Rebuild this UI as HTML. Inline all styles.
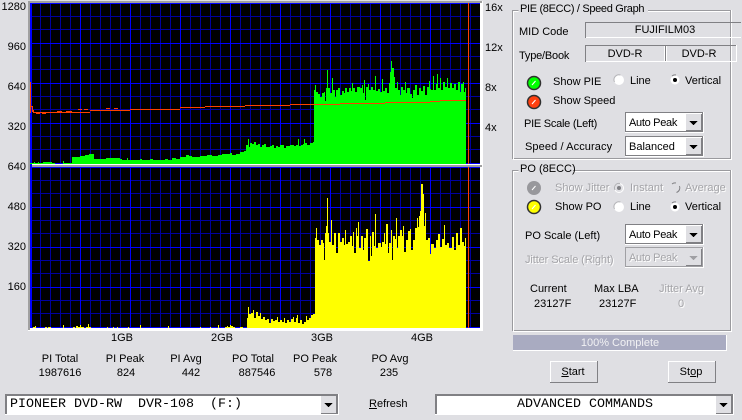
<!DOCTYPE html>
<html><head><meta charset="utf-8">
<style>
html,body{margin:0;padding:0}
body{width:742px;height:420px;overflow:hidden;background:#dfdfe3;position:relative;font-family:"Liberation Sans",sans-serif;font-size:11px;color:#000}
svg{position:absolute;left:0;top:0}
.t{position:absolute;white-space:pre;line-height:14px;transform:translateY(-7px)}
.c{transform:translate(-50%,-7px)}
.r{transform:translate(-100%,-7px)}
.g{color:#a4a4a8;text-shadow:1px 1px 0 #fff}
.m{font-family:"Liberation Mono",monospace;font-size:13.33px}
u{text-decoration:underline}
</style></head><body>
<svg width="742" height="420" viewBox="0 0 742 420" shape-rendering="crispEdges">
<defs>
<pattern id="a" x="30" y="3" width="50" height="40" patternUnits="userSpaceOnUse">
<rect width="50" height="40" fill="#000"/>
<path d="M10.5 0V40M20.5 0V40M30.5 0V40M40.5 0V40M0 13.5H50M0 26.5H50" stroke="#0000a0" fill="none"/>
<path d="M.5 0V40M0 .5H50" stroke="#0000ff" fill="none"/>
</pattern>
<pattern id="b" x="30" y="167" width="50" height="40" patternUnits="userSpaceOnUse">
<rect width="50" height="40" fill="#000"/>
<path d="M10.5 0V40M20.5 0V40M30.5 0V40M40.5 0V40M0 13.5H50M0 26.5H50" stroke="#0000a0" fill="none"/>
<path d="M.5 0V40M0 .5H50" stroke="#0000ff" fill="none"/>
</pattern>
</defs>
<!-- chart frames -->
<rect x="28" y="1" width="455" height="330" fill="#fff"/>
<rect x="28" y="1" width="454" height="2" fill="#a0a0a0"/>
<rect x="28" y="1" width="2" height="329" fill="#a0a0a0"/>
<rect x="30" y="3" width="450" height="161" fill="url(#a)"/>
<rect x="30" y="164" width="452" height="1" fill="#fff"/>
<rect x="28" y="165" width="454" height="2" fill="#a0a0a0"/>
<rect x="30" y="167" width="450" height="161" fill="url(#b)"/>
<rect x="30" y="3" width="2" height="325" fill="#0000ff"/>
<rect x="30" y="327" width="450" height="1" fill="#0000ff"/>
<!-- green PIE -->
<path fill="#00ff00" d="M30 164V163H34V162H35V163H38V162H39V163H43V162H52V163H55V164H63V161H64V163H66V163H72V157H80V156H85V155H89V154H94V159H106V158H120V159H122V160H127V158H128V160H140V159H142V160H150V159H153V160H165V159H168V160H172V158H176V159H180V157H186V155H189V156H192V157H200V156H207V155H212V156H218V155H222V154H230V153H232V155H236V154H240V152H244V151H246V145H248V139H249V147H250V143H252V144H254V142H256V145H258V144H260V147H262V145H264V144H266V147H270V146H272V145H274V148H276V146H278V147H280V145H284V148H286V146H290V145H294V146H296V145H298V139H299V146H301V145H303V144H304V139H305V143H307V145H310V143H313V142H314V90H315V85H316V92H318V94H320V97H322V93H324V92H325V101H326V88H327V70H328V88H330V93H332V78H333V90H335V97H336V90H338V88H340V95H342V91H344V93H345V88H347V92H349V88H351V91H352V83H353V88H355V92H357V87H360V88H362V85H363V93H364V80H365V100H366V87H368V84H369V90H371V87H373V90H375V76H376V91H378V89H380V92H382V79H383V91H385V88H387V93H389V83H390V72H391V61H392V68H394V77H395V88H397V82H398V90H400V95H401V87H403V90H405V82H406V93H407V88H410V94H412V98H413V90H415V85H417V95H419V88H421V91H423V86H425V95H427V87H429V81H430V89H431V90H433V76H434V90H436V84H437V74H438V88H440V78H441V90H443V82H445V87H447V78H448V88H450V83H452V88H454V84H456V90H458V82H460V92H461V84H463V82H464V92H465V88H466V164Z"/>
<!-- yellow PO -->
<path fill="#ffff00" d="M33 328V327H35V326H36V328H45V327H47V328H48V327H51V328H63V325H64V328H73V327H75V328H76V326H78V327H80V325H81V327H84V328H86V327H88V324H89V327H91V328H107V327H108V328H113V327H114V328H117V327H118V328H128V327H129V328H140V325H141V328H168V326H169V328H200V327H201V328H210V327H211V328H218V325H219V328H225V327H227V326H228V327H230V325H231V326H233V327H235V328H240V327H243V328H247V318H248V307H249V314H251V313H253V310H254V318H256V312H258V316H260V313H261V319H263V317H265V320H267V319H269V323H271V319H273V321H275V320H277V317H278V322H280V320H282V322H284V318H285V323H287V320H289V322H291V319H293V317H294V322H296V318H297V315H298V323H300V320H302V324H304V322H306V316H307V320H309V318H311V315H313V314H315V238H316V228H317V240H319V245H321V240H323V243H324V260H325V233H326V226H327V198H328V233H329V242H331V220H332V245H334V233H336V253H338V233H340V242H342V238H344V245H345V230H346V244H348V242H350V236H352V246H353V232H354V253H356V228H357V236H358V222H359V248H361V236H363V250H364V238H366V229H368V261H370V236H371V256H372V232H374V246H375V214H376V248H378V243H381V247H382V242H384V233H385V244H386V224H388V253H389V243H391V230H392V260H393V236H395V239H396V218H397V248H398V236H400V230H402V236H403V226H404V252H406V240H408V231H410V229H411V250H413V240H415V228H417V218H418V227H419V216H420V211H421V184H423V194H424V226H425V213H426V240H428V238H430V254H431V244H434V248H436V240H438V234H440V247H442V239H444V225H445V245H447V243H449V248H452V237H454V250H456V233H458V245H460V228H462V242H464V246H465V238H466V328Z"/>
<!-- speed line -->
<path d="M30.500 82V113M31 106.500H32.500V112M33.500 110V113M34 112.500H90M90 110.500H130M130 109.500H180M180 107.500H205M205 106.500H245M245 105.500H290M290 104.500H340M340 103.500H385M385 102.500H430M430 101.500H440M440 100.500H466" fill="none" stroke="#ff4000"/>
<path d="M36 113.500H40M42 113.500H46M57 111.500H62M66 111.500H72M78 109.500H82M84 109.500H88M106 108.500H110M114 108.500H118" stroke="#ff4000" fill="none"/>
<path d="M468.500 3V164M468.500 167V328" stroke="#ff4000" fill="none"/>
</svg>

<!-- axis labels -->
<div class="t r" style="left:26px;top:7px">1280</div>
<div class="t r" style="left:26px;top:47px">960</div>
<div class="t r" style="left:26px;top:87px">640</div>
<div class="t r" style="left:26px;top:127px">320</div>
<div class="t r" style="left:26px;top:167px">640</div>
<div class="t r" style="left:26px;top:207px">480</div>
<div class="t r" style="left:26px;top:247px">320</div>
<div class="t r" style="left:26px;top:287px">160</div>
<div class="t" style="left:485px;top:8px">16x</div>
<div class="t" style="left:485px;top:48px">12x</div>
<div class="t" style="left:485px;top:88px">8x</div>
<div class="t" style="left:485px;top:128px">4x</div>
<div class="t c" style="left:122px;top:338px">1GB</div>
<div class="t c" style="left:222px;top:338px">2GB</div>
<div class="t c" style="left:322px;top:338px">3GB</div>
<div class="t c" style="left:422px;top:338px">4GB</div>

<!-- stats -->
<div class="t c" style="left:60px;top:359px">PI Total</div>
<div class="t c" style="left:60px;top:373px">1987616</div>
<div class="t c" style="left:125px;top:359px">PI Peak</div>
<div class="t c" style="left:126px;top:373px">824</div>
<div class="t c" style="left:186px;top:359px">PI Avg</div>
<div class="t c" style="left:191px;top:373px">442</div>
<div class="t c" style="left:253px;top:359px">PO Total</div>
<div class="t c" style="left:257px;top:373px">887546</div>
<div class="t c" style="left:315px;top:359px">PO Peak</div>
<div class="t c" style="left:323px;top:373px">578</div>
<div class="t c" style="left:390px;top:359px">PO Avg</div>
<div class="t c" style="left:389px;top:373px">235</div>

<!-- right panel shapes -->
<svg width="742" height="420" viewBox="0 0 742 420" shape-rendering="crispEdges">
<g fill="none">
<path d="M518.500 10.500H512.500V158.500H730.500V10.500H648" stroke="#9a9a9e"/>
<path d="M518.500 11.500H513.500V159.500H731.500V10M648 11.500H730" stroke="#fff"/>
<path d="M518.500 170.500H512.500V330.500H730.500V170.500H573" stroke="#9a9a9e"/>
<path d="M518.500 171.500H513.500V331.500H731.500V170M573 171.500H730" stroke="#fff"/>
</g>
<path d="M585.500 38V22.500H741" fill="none" stroke="#808084"/>
<path d="M586 37.500H741" fill="none" stroke="#fff"/>
<path d="M585.500 62V45.500H736M665.500 46V62" fill="none" stroke="#808084"/>
<path d="M586 61.500H736.500V45M664.500 46V61M666.500 46V61" fill="none" stroke="#fff"/>
<rect x="513" y="335" width="214" height="16" fill="#fff"/>
<rect x="513" y="335" width="213" height="15" fill="#a9abc1"/>
<g>
<rect x="550" y="361" width="48" height="22" fill="#808084"/>
<rect x="550" y="361" width="47" height="21" fill="#fff"/>
<rect x="551" y="362" width="46" height="20" fill="#dfdfe3"/>
<rect x="668" y="361" width="48" height="22" fill="#808084"/>
<rect x="668" y="361" width="47" height="21" fill="#fff"/>
<rect x="669" y="362" width="46" height="20" fill="#dfdfe3"/>
</g>
<g>
<rect x="625" y="112" width="79" height="21" fill="#fff"/><rect x="625" y="112" width="78" height="20" fill="#808084"/><rect x="626" y="113" width="76" height="18" fill="#fff"/>
<rect x="686" y="114" width="16" height="17" fill="#808084"/><rect x="686" y="114" width="15" height="16" fill="#dfdfe3"/>
<path d="M689 121h9l-4.500 4z" fill="#000"/>
<rect x="625" y="136" width="79" height="21" fill="#fff"/><rect x="625" y="136" width="78" height="20" fill="#808084"/><rect x="626" y="137" width="76" height="18" fill="#fff"/>
<rect x="686" y="138" width="16" height="17" fill="#808084"/><rect x="686" y="138" width="15" height="16" fill="#dfdfe3"/>
<path d="M689 145h9l-4.500 4z" fill="#000"/>
<rect x="625" y="224" width="79" height="21" fill="#fff"/><rect x="625" y="224" width="78" height="20" fill="#808084"/><rect x="626" y="225" width="76" height="18" fill="#fff"/>
<rect x="686" y="226" width="16" height="17" fill="#808084"/><rect x="686" y="226" width="15" height="16" fill="#dfdfe3"/>
<path d="M689 233h9l-4.500 4z" fill="#000"/>
<rect x="625" y="247" width="79" height="21" fill="#fff"/><rect x="625" y="247" width="78" height="20" fill="#a0a0a4"/><rect x="626" y="248" width="76" height="18" fill="#dfdfe3"/>
<rect x="686" y="249" width="16" height="17" fill="#808084"/><rect x="686" y="249" width="15" height="16" fill="#dfdfe3"/>
<path d="M689 256h9l-4.500 4z" fill="#a0a0a4"/>
<rect x="5" y="394" width="334" height="21" fill="#fff"/><rect x="5" y="394" width="333" height="20" fill="#808084"/><rect x="7" y="396" width="330" height="18" fill="#fff"/>
<rect x="321" y="396" width="16" height="18" fill="#808084"/><rect x="321" y="396" width="15" height="17" fill="#dfdfe3"/>
<path d="M324 403h9l-4.500 4z" fill="#000"/>
<rect x="435" y="394" width="299" height="21" fill="#fff"/><rect x="435" y="394" width="298" height="20" fill="#808084"/><rect x="437" y="396" width="295" height="18" fill="#fff"/>
<rect x="716" y="396" width="16" height="18" fill="#808084"/><rect x="716" y="396" width="15" height="17" fill="#dfdfe3"/>
<path d="M719 403h9l-4.500 4z" fill="#000"/>
</g>
</svg>
<svg width="742" height="420" viewBox="0 0 742 420">
<circle cx="534" cy="83" r="6.500" fill="#00ff00" stroke="#303030" stroke-width="1.500"/>
<path d="M532 85l3.500-4" stroke="#fff" fill="none"/>
<circle cx="534" cy="102" r="6.500" fill="#ff4010" stroke="#303030" stroke-width="1.500"/>
<path d="M532 104l3.500-4" stroke="#fff" fill="none"/>
<circle cx="534" cy="188" r="7" fill="#98989c"/>
<path d="M532 190l3.500-4" stroke="#fff" fill="none"/>
<circle cx="534" cy="207" r="6.500" fill="#ffff00" stroke="#303030" stroke-width="1.500"/>
<path d="M532 209l3.500-4" stroke="#fff" fill="none"/>
<!-- radios -->
<g fill="#fff">
<circle cx="619" cy="80" r="5"/>
<circle cx="675" cy="80" r="4.500"/>
<circle cx="619" cy="207" r="5"/>
<circle cx="675" cy="207" r="4.500"/>
</g>
<g fill="none" stroke="#b4b4b8">
<path d="M614.500 82a5 5 0 0 1 6-7"/>
<path d="M614.500 209a5 5 0 0 1 6-7"/>
</g>
<g fill="none" stroke="#808084">
<path d="M672 76a5 5 0 0 1 4-1"/>
<path d="M672 203a5 5 0 0 1 4-1"/>
<path d="M672 184a5 5 0 0 1 4-1M679.500 186a5 5 0 0 1-3 6.500"/>
</g>
<circle cx="619" cy="188" r="4.500" fill="#dfdfe3" stroke="#fff"/>
<path d="M615 190a4.500 4.500 0 0 1 5-6.500" stroke="#b0b0b4" fill="none"/>
<circle cx="619" cy="188" r="2" fill="#808084"/>
<circle cx="675" cy="80" r="2" fill="#000"/>
<circle cx="675" cy="207" r="2" fill="#000"/>
</svg>

<!-- PIE group text -->
<div class="t" style="left:520px;top:9px;letter-spacing:-.33px">PIE (8ECC) / Speed Graph</div>
<div class="t" style="left:519px;top:32px">MID Code</div>
<div class="t c" style="left:665px;top:30px">FUJIFILM03</div>
<div class="t" style="left:519px;top:56px;letter-spacing:-.2px">Type/Book</div>
<div class="t c" style="left:625px;top:54px">DVD-R</div>
<div class="t c" style="left:699px;top:54px">DVD-R</div>
<div class="t" style="left:553px;top:82px">Show PIE</div>
<div class="t" style="left:630px;top:81px">Line</div>
<div class="t" style="left:685px;top:81px">Vertical</div>
<div class="t" style="left:553px;top:101px">Show Speed</div>
<div class="t" style="left:524px;top:124px;letter-spacing:-.25px">PIE Scale (Left)</div>
<div class="t" style="left:629px;top:123px;letter-spacing:-.3px">Auto Peak</div>
<div class="t" style="left:525px;top:147px;letter-spacing:.1px">Speed / Accuracy</div>
<div class="t" style="left:629px;top:147px">Balanced</div>

<!-- PO group text -->
<div class="t" style="left:520px;top:169px">PO (8ECC)</div>
<div class="t g" style="left:555px;top:188px">Show Jitter</div>
<div class="t g" style="left:630px;top:188px">Instant</div>
<div class="t g" style="left:685px;top:188px">Average</div>
<div class="t" style="left:555px;top:207px">Show PO</div>
<div class="t" style="left:630px;top:207px">Line</div>
<div class="t" style="left:685px;top:207px">Vertical</div>
<div class="t" style="left:525px;top:236px">PO Scale (Left)</div>
<div class="t" style="left:629px;top:235px;letter-spacing:-.3px">Auto Peak</div>
<div class="t g" style="left:525px;top:260px;letter-spacing:-.1px">Jitter Scale (Right)</div>
<div class="t g" style="left:629px;top:258px;letter-spacing:-.3px">Auto Peak</div>
<div class="t" style="left:530px;top:289px">Current</div>
<div class="t" style="left:534px;top:304px">23127F</div>
<div class="t" style="left:594px;top:289px">Max LBA</div>
<div class="t" style="left:599px;top:304px">23127F</div>
<div class="t g" style="left:659px;top:289px">Jitter Avg</div>
<div class="t g" style="left:678px;top:304px">0</div>

<div class="t c" style="left:620px;top:343px;color:#f2f2f4">100% Complete</div>
<div class="t c" style="left:573px;top:372px"><u>S</u>tart</div>
<div class="t c" style="left:691px;top:372px">St<u>o</u>p</div>

<div class="t m" style="left:10px;top:405px">PIONEER DVD-RW  DVR-108  (F:)</div>
<div class="t" style="left:369px;top:404px"><u>R</u>efresh</div>
<div class="t m c" style="left:585px;top:405px">ADVANCED COMMANDS</div>
</body></html>
